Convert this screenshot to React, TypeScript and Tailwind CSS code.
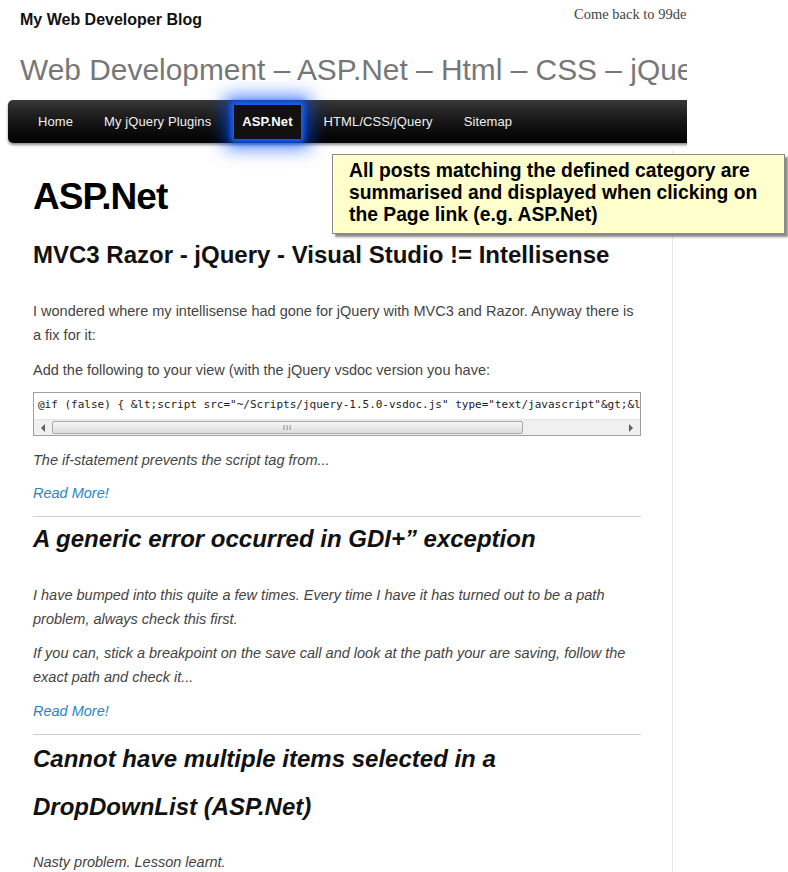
import React from 'react';

const sans = "font-['Liberation_Sans',Arial,sans-serif]";

const navItems = ['Home', 'My jQuery Plugins', 'ASP.Net', 'HTML/CSS/jQuery', 'Sitemap'];

const ReadMore: React.FC = () => (
  <p className="mb-[11px] text-[14.5px] leading-[24px] italic text-[#2a84c6]">Read More!</p>
);

const CodeBox: React.FC = () => (
  <div className="mb-[12px] h-[44px] border border-[#a0a0a0] bg-white overflow-hidden flex flex-col">
    <pre className="px-[4px] pt-[5px] h-[26px] font-['DejaVu_Sans_Mono',monospace] text-[11px] leading-[14px] text-[#222] whitespace-pre overflow-hidden">
      {'@if (false) { &lt;script src="~/Scripts/jquery-1.5.0-vsdoc.js" type="text/javascript"&gt;&lt;/script&gt; }'}
    </pre>
    {/* fake horizontal scrollbar */}
    <div className="flex items-center h-[16px] bg-[#f0f0f0] border-t border-[#e4e4e4]">
      <div className="w-[18px] flex justify-center">
        <span className="block w-0 h-0 border-y-[4px] border-y-transparent border-r-[4px] border-r-[#606060]" />
      </div>
      <div className="flex-1 h-full py-[1px] pr-[99px]">
        <div className="h-full rounded-[2px] border border-[#a8a8a8] bg-gradient-to-b from-[#f6f6f6] to-[#dcdcdc] flex items-center justify-center">
          <span className="text-[8px] leading-none text-[#777] tracking-[1px]">III</span>
        </div>
      </div>
      <div className="w-[18px] flex justify-center">
        <span className="block w-0 h-0 border-y-[4px] border-y-transparent border-l-[4px] border-l-[#606060]" />
      </div>
    </div>
  </div>
);

const Hr: React.FC = () => <div className="h-px bg-[#d0d0d0]" />;

export default function App() {
  return (
    <div className={`relative w-[788px] h-[872px] overflow-hidden bg-white ${sans}`}>
      <div className="w-[687px] h-full overflow-hidden">
        {/* header */}
        <div className="flex pt-[10px] h-[42px]">
          <div className="w-[574px] shrink-0 pl-[20px] text-[16px] font-bold leading-[20px] text-[#111]">
            My Web Developer Blog
          </div>
          <div className="shrink-0 whitespace-nowrap -mt-[6px] font-['Liberation_Serif',serif] text-[14.5px] leading-[20px] text-[#444]">
            Come back to 99devs home
          </div>
        </div>
        <div className="h-[58px] pl-[20px] whitespace-nowrap text-[29.9px] leading-[56px] text-[#777]">
          Web Development – ASP.Net – Html – CSS – jQuery
        </div>

        {/* nav */}
        <div className="ml-[8px] w-[720px] h-[43px] rounded-l-[5px] bg-gradient-to-b from-[#383838] via-[#161616] to-[#030303] shadow-[0_2px_3px_rgba(0,0,0,0.45)] flex items-center pl-[22px] gap-[15px]">
          {navItems.map((item) =>
            item === 'ASP.Net' ? (
              <div
                key={item}
                className="h-[34px] px-[8px] flex items-center bg-[#111] text-white font-bold text-[13px] tracking-[0.1px] shadow-[0_0_5px_3px_rgba(30,100,255,0.95),0_0_18px_9px_rgba(0,80,255,0.7)]"
              >
                {item}
              </div>
            ) : (
              <div key={item} className="h-[34px] px-[8px] flex items-center text-[#f0f0f0] text-[13px] tracking-[0.1px]">
                {item}
              </div>
            )
          )}
        </div>

        {/* content row */}
        <div className="flex mt-[7px] h-[800px]">
          <div className="ml-[33px] w-[608px] pt-[23px] text-[#444]">
            <h1 className="mb-[10px] text-[37px] font-bold leading-[48px] text-black tracking-[-1px]">ASP.Net</h1>

            <h2 className="mb-[20px] text-[24px] font-bold leading-[48px] text-[#111]">
              MVC3 Razor - jQuery - Visual Studio != Intellisense
            </h2>
            <p className="mb-[11px] text-[14.5px] leading-[24px]">
              I wondered where my intellisense had gone for jQuery with MVC3 and Razor. Anyway there is a fix for it:
            </p>
            <p className="mb-[10px] text-[14.5px] leading-[24px]">
              Add the following to your view (with the jQuery vsdoc version you have:
            </p>
            <CodeBox />
            <p className="mb-[9px] text-[14.5px] leading-[24px] italic">
              The if-statement prevents the script tag from...
            </p>
            <ReadMore />
            <Hr />

            <h2 className="-mt-[2px] mb-[20px] text-[24px] font-bold italic leading-[48px] text-[#111]">
              A generic error occurred in GDI+” exception
            </h2>
            <p className="mb-[10px] text-[14.5px] leading-[24px] italic">
              I have bumped into this quite a few times. Every time I have it has turned out to be a path problem, always check this first.
            </p>
            <p className="mb-[10px] text-[14.5px] leading-[24px] italic">
              If you can, stick a breakpoint on the save call and look at the path your are saving, follow the exact path and check it...
            </p>
            <ReadMore />
            <Hr />

            <h2 className="mb-[19px] text-[24px] font-bold italic leading-[48px] text-[#111]">
              Cannot have multiple items selected in a DropDownList (ASP.Net)
            </h2>
            <p className="mb-[10px] text-[14.5px] leading-[24px] italic">Nasty problem. Lesson learnt.</p>
          </div>
          <div className="ml-[31px] flex-1 border-l border-[#e6e6e6]" />
        </div>
      </div>

      {/* annotation callout */}
      <div className="absolute left-[332px] top-[154px] w-[453px] h-[80px] border border-[#8a8a8a] bg-[#ffffcc] shadow-[3px_3px_2px_rgba(90,90,90,0.7)] pl-[16px] pt-[5px]">
        <p className="text-[19.3px] font-bold leading-[22px] text-black">
          All posts matching the defined category are summarised and displayed when clicking on the Page link (e.g. ASP.Net)
        </p>
      </div>
    </div>
  );
}
